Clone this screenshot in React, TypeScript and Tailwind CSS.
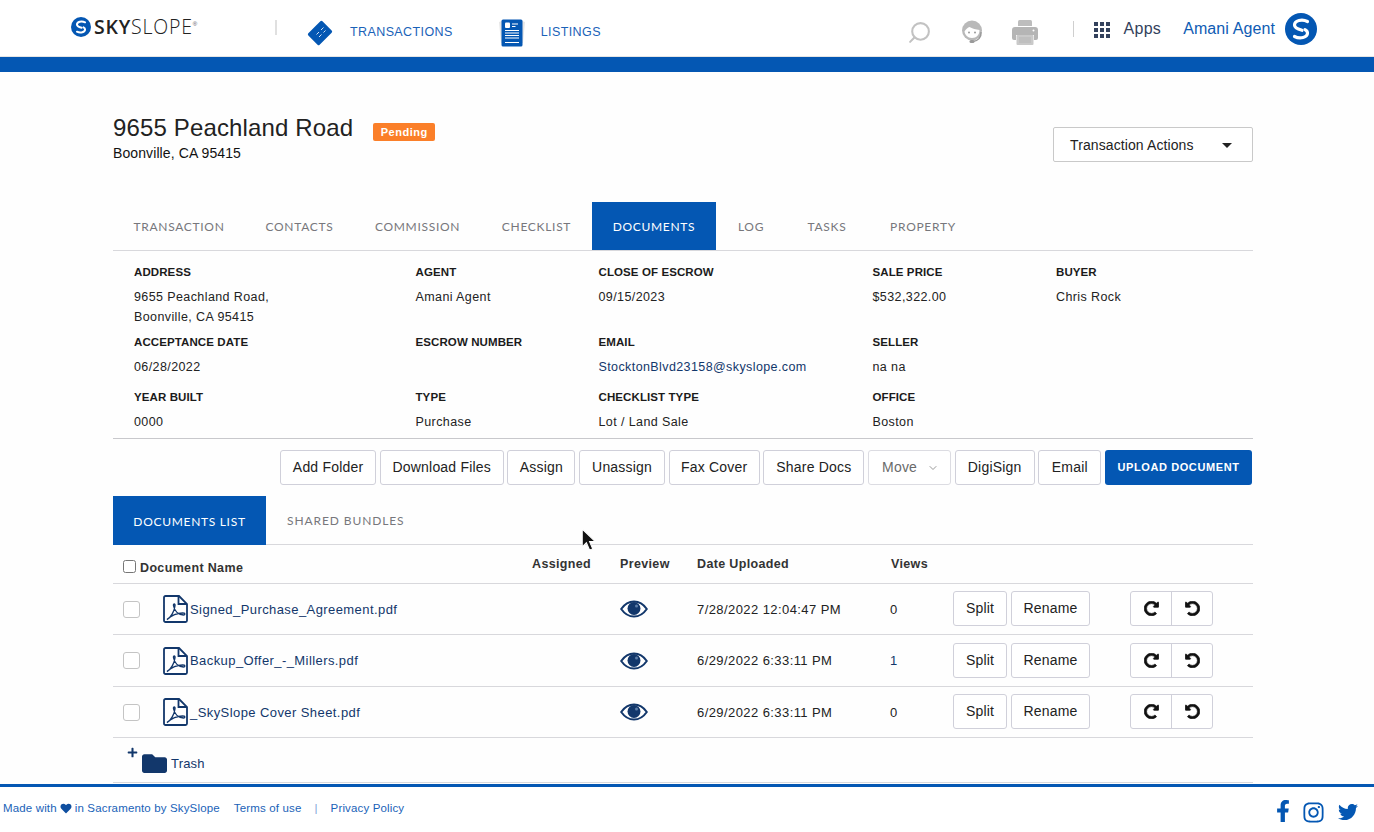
import { FaFacebookF, FaFolder, FaHeart, FaInstagram, FaPlus, FaRedoAlt, FaTwitter, FaUndoAlt } from 'react-icons/fa';
import { ChevronDown, Search } from 'lucide-react';

const tabs = [
  { label: 'TRANSACTION', width: 'w-[132px]' },
  { label: 'CONTACTS', width: 'w-[109px]' },
  { label: 'COMMISSION', width: 'w-[127px]' },
  { label: 'CHECKLIST', width: 'w-[111px]' },
  { label: 'DOCUMENTS', width: 'w-[124px]' },
  { label: 'LOG', width: 'w-[70px]' },
  { label: 'TASKS', width: 'w-[82px]' },
  { label: 'PROPERTY', width: 'w-[110px]' },
];

const toolbar = [
  { label: 'Add Folder', width: 'w-[96px]' },
  { label: 'Download Files', width: 'w-[124px]' },
  { label: 'Assign', width: 'w-[68px]' },
  { label: 'Unassign', width: 'w-[86px]' },
  { label: 'Fax Cover', width: 'w-[91px]' },
  { label: 'Share Docs', width: 'w-[101px]' },
];

const docs = [
  { name: 'Signed_Purchase_Agreement.pdf', date: '7/28/2022 12:04:47 PM', views: '0', height: 'h-[51px]', text: 'mt-[2px]', btn: 'mb-[2px]' },
  { name: 'Backup_Offer_-_Millers.pdf', date: '6/29/2022 6:33:11 PM', views: '1', height: 'h-[52px]', text: '', btn: '' },
  { name: '_SkySlope Cover Sheet.pdf', date: '6/29/2022 6:33:11 PM', views: '0', height: 'h-[51px]', text: 'mt-[2px]', btn: 'mb-[2px]' },
];

const rowCols = 'grid grid-cols-[419px_88px_77px_193px_63px_177px_123px] items-center';
const infoCols = 'grid grid-cols-[281.5px_183px_274px_183.5px_1fr] pl-[21px]';

function SLogo({ className }: { className: string }) {
  return (
    <svg viewBox="0 0 32 32" className={className}>
      <circle cx="16" cy="16" r="16" fill="#0457b3" />
      <g fill="none" stroke="#fff" strokeWidth="3.200" strokeLinecap="round">
        <path d="M22.500 8.500C17 5.800 9.500 7.500 9.500 12c0 3 4 4.300 7.500 5.300" />
        <path d="M9.500 23.500C15 26.200 22.500 24.500 22.500 20c0-1.500-1-2.600-2.500-3.400" />
      </g>
    </svg>
  );
}

function CardIcon() {
  return (
    <svg viewBox="0 0 26 26" className="w-[26px] h-[26px]">
      <rect x="5" y="3" width="16" height="20" rx="1.500" fill="#0457b3" transform="rotate(45 13 13)" />
      <path d="M9.500 14.500l2.500-2.500M14 10l2.500-2.500M12 17l2.500-2.500M16.500 12.500l2-2" stroke="#d3e2f4" strokeWidth="1" />
    </svg>
  );
}

function ListingIcon() {
  return (
    <svg viewBox="0 0 26 28" className="w-[26px] h-[28px]">
      <path d="M0 3l3-1v22l-1 0zM26 3l-3-1v22l1 0z" fill="#e6e6e6" />
      <rect x="2.500" y="0.500" width="21" height="27" rx="1.500" fill="#0457b3" />
      <rect x="6" y="3.500" width="5" height="5.500" rx="1" fill="#fff" />
      <path d="M13 5h6M13 7.500h3.500M6 11.500h14M6 14h14M6 16.500h14M6 19h14M6 23.500h14" stroke="#fff" strokeWidth="1.200" />
    </svg>
  );
}

function HeadsetIcon() {
  return (
    <svg viewBox="0 0 24 26" className="w-[24px] h-[26px] mt-[7px]">
      <circle cx="12" cy="11.500" r="10" fill="#b9b9b9" />
      <path d="M4.500 12.500C6 10 8 8.500 9.500 8c2.500 1.500 6.500 2.500 10 3 .2 4.500-3 8-7.500 8s-7-3-7.500-6.500z" fill="#fff" />
      <circle cx="9" cy="13.500" r="1" fill="#9a9a9a" />
      <circle cx="15" cy="13.500" r="1" fill="#9a9a9a" />
      <path d="M21 13c.5 5.500-3 9-8 9.500" fill="none" stroke="#9a9a9a" strokeWidth="1.500" />
      <rect x="9.500" y="21" width="5" height="3" rx="1.500" fill="#9a9a9a" />
    </svg>
  );
}

function PrinterIcon() {
  return (
    <svg viewBox="0 0 26 25" className="w-[26px] h-[25px] mt-[9px]">
      <path d="M6 1.500A1.500 1.500 0 0 1 7.500 0h11A1.500 1.500 0 0 1 20 1.500V6H6z" fill="#bdbdbd" />
      <path d="M3 7h20a3 3 0 0 1 3 3v8a2 2 0 0 1-2 2h-2v-5H4v5H2a2 2 0 0 1-2-2v-8a3 3 0 0 1 3-3z" fill="#b5b5b5" />
      <circle cx="21.500" cy="10.500" r="1" fill="#fff" />
      <rect x="4.500" y="15" width="17" height="10" rx="1" fill="#c9c9c9" />
      <path d="M7 18h12M7 20h12M7 22h12" stroke="#b5b5b5" strokeWidth="1" />
    </svg>
  );
}

function AppsIcon() {
  return (
    <div className="grid grid-cols-3 gap-[2px] w-[16px] mt-[4px]">
      {Array.from({ length: 9 }).map((_, i) => (
        <div key={i} className="w-[4px] h-[4px] bg-[#33415c]" />
      ))}
    </div>
  );
}

function PdfIcon() {
  return (
    <svg viewBox="0 0 25 28" className="ml-[1px] w-[25px] h-[28px] shrink-0">
      <path d="M2.500 1H16l8 8v16.500a1.500 1.500 0 0 1-1.500 1.500h-20A1.500 1.500 0 0 1 1 25.500v-23A1.500 1.500 0 0 1 2.500 1z" fill="#fff" stroke="#12376b" strokeWidth="1.800" />
      <path d="M15.500 1v8h8.500" fill="none" stroke="#12376b" strokeWidth="1.800" />
      <path
        d="M4 24.500c3.500-1.500 7.500-8 8-14 .2-2-1.700-2-1.500 0 .8 5 4.500 9 10 9.500 1.800 0 1.800-2 0-2-5-.2-11.500 2-16.500 6.500z"
        fill="none"
        stroke="#12376b"
        strokeWidth="1.400"
      />
    </svg>
  );
}

function EyeIcon() {
  return (
    <svg viewBox="0 0 28 18" className="w-[28px] h-[18px]">
      <path d="M1.200 9C5 3.500 9.500 1.500 14 1.500S23 3.500 26.800 9C23 14.500 18.500 16.500 14 16.500S5 14.500 1.200 9z" fill="#fff" stroke="#12376b" strokeWidth="2" />
      <circle cx="14" cy="8.500" r="6.500" fill="#12376b" />
      <circle cx="16.500" cy="6" r="1.500" fill="#5d7ea8" />
    </svg>
  );
}

function Info({ label, lines, link }: { label?: string; lines?: string[]; link?: boolean }) {
  return (
    <div className="text-[12.500px] leading-5 tracking-[0.4px]">
      <div className="h-5 font-bold text-[11.500px] tracking-[0.1px] text-[#1b1b1b]">{label}</div>
      <div className={`mt-[5px] ${link ? 'text-[#12376b]' : 'text-[#222]'}`}>
        {lines?.map((l) => (
          <div key={l}>{l}</div>
        ))}
      </div>
    </div>
  );
}

function Btn({ label, width }: { label: string; width: string }) {
  return (
    <button className={`${width} h-[35px] shrink-0 bg-white border border-[#d0d0da] rounded-[3px] text-[14px] tracking-[0.2px] text-[#222]`}>
      {label}
    </button>
  );
}

export default function App() {
  return (
    <div
      className="relative h-[832px] overflow-hidden flex flex-col bg-[#fefefe]"
      style={{ fontFamily: '"Liberation Sans", Arial, sans-serif' }}
    >
      <header className="h-[57px] shrink-0 bg-white flex items-center border-b border-[#e5e5e5]">
        <div className="flex items-center ml-[71px] w-[204px] -mt-[2px] h-[30px]">
          <SLogo className="w-[20px] h-[20px]" />
          <span className="ml-[3px] text-[19.500px] tracking-[0.8px] text-[#222] font-['Open_Sans',sans-serif] font-light leading-none">
            <b className="font-semibold">SKY</b>SLOPE
          </span>
          <sup className="text-[6px] text-[#555]">®</sup>
        </div>
        <div className="w-[2px] h-[15px] -mt-[1px] bg-[#e0e0e0]" />
        <div className="flex items-center ml-[30px] gap-[17px] mt-[9px]">
          <CardIcon />
          <span className="text-[12.500px] tracking-[0.4px] text-[#1a62b8]">TRANSACTIONS</span>
        </div>
        <div className="flex items-center ml-[46px] gap-[16px] mt-[9px]">
          <ListingIcon />
          <span className="text-[12.500px] tracking-[0.4px] text-[#1a62b8]">LISTINGS</span>
        </div>
        <div className="flex-1" />
        <div className="flex items-center">
          <Search className="w-[25px] h-[25px] text-[#c2c2c2] -scale-x-100 mt-[8px]" strokeWidth={2} />
          <div className="ml-[28px]">
            <HeadsetIcon />
          </div>
          <div className="ml-[28px]">
            <PrinterIcon />
          </div>
          <div className="ml-[35px] mt-[2px] w-[1px] h-[16px] bg-[#cfcfcf]" />
          <div className="ml-[20px]">
            <AppsIcon />
          </div>
          <span className="ml-[14px] mt-[2px] text-[16px] tracking-[0.3px] text-[#33415c]">Apps</span>
          <span className="ml-[22px] mt-[2px] text-[16px] tracking-[0.1px] text-[#0f5cb4]">Amani Agent</span>
          <SLogo className="ml-[10px] mr-[57px] mt-[2px] w-[32px] h-[32px]" />
        </div>
      </header>
      <div className="h-[15px] shrink-0 bg-[#0457b3]" />

      <main className="w-[1140px] ml-[113px] flex-1 flex flex-col">
        <div className="h-[130px] shrink-0 flex justify-between">
          <div className="pt-[41px]">
            <div className="flex items-center">
              <h1 className="text-[24px] leading-[30px] tracking-[0.14px] text-[#222]">9655 Peachland Road</h1>
              <span className="ml-[20px] mt-[8px] h-[18px] w-[62px] rounded-[2px] bg-[#fb7f29] text-white text-[11px] font-bold tracking-[0.5px] flex items-center justify-center">
                Pending
              </span>
            </div>
            <div className="text-[14px] leading-5 tracking-[0.1px] text-[#111]">Boonville, CA 95415</div>
          </div>
          <button className="mt-[55px] w-[200px] h-[35px] bg-white border border-[#c9c9c9] rounded-[2px] flex items-center justify-between pl-[16px] pr-[20px] pt-[1px] text-[14px] tracking-[0.1px] text-[#222]">
            Transaction Actions
            <span className="w-0 h-0 border-x-[5px] border-x-transparent border-t-[5px] border-t-[#222]" />
          </button>
        </div>

        <nav className="h-[49px] shrink-0 flex border-b border-[#d8d8dc] text-[12px] font-['Lato',sans-serif] tracking-[0.7px] text-[#77777c]">
          {tabs.map((t) => (
            <div
              key={t.label}
              className={`${t.width} h-[48px] pt-[2px] flex items-center justify-center ${t.label === 'DOCUMENTS' ? 'bg-[#0457b3] text-white' : ''}`}
            >
              {t.label}
            </div>
          ))}
        </nav>

        <section className="h-[188px] shrink-0 pt-[11px] border-b border-[#c8c8cc]">
          <div className={`${infoCols} mb-[5px]`}>
            <Info label="ADDRESS" lines={['9655 Peachland Road,', 'Boonville, CA 95415']} />
            <Info label="AGENT" lines={['Amani Agent']} />
            <Info label="CLOSE OF ESCROW" lines={['09/15/2023']} />
            <Info label="SALE PRICE" lines={['$532,322.00']} />
            <Info label="BUYER" lines={['Chris Rock']} />
          </div>
          <div className={`${infoCols} mb-[10px]`}>
            <Info label="ACCEPTANCE DATE" lines={['06/28/2022']} />
            <Info label="ESCROW NUMBER" />
            <Info label="EMAIL" lines={['StocktonBlvd23158@skyslope.com']} link />
            <Info label="SELLER" lines={['na na']} />
            <div />
          </div>
          <div className={infoCols}>
            <Info label="YEAR BUILT" lines={['0000']} />
            <Info label="TYPE" lines={['Purchase']} />
            <Info label="CHECKLIST TYPE" lines={['Lot / Land Sale']} />
            <Info label="OFFICE" lines={['Boston']} />
            <div />
          </div>
        </section>

        <div className="h-[57px] shrink-0 flex justify-end items-start gap-[3.670px] pt-[11px] pr-[1px]">
          {toolbar.map((b) => (
            <Btn key={b.label} {...b} />
          ))}
          <button className="w-[83px] h-[35px] shrink-0 bg-white border border-[#dcdce2] rounded-[3px] flex items-center pl-[13px] text-[14px] tracking-[0.2px] text-[#6a6a6a]">
            Move
            <ChevronDown className="ml-[10px] w-[12px] h-[12px] text-[#999]" />
          </button>
          <Btn label="DigiSign" width="w-[80px]" />
          <Btn label="Email" width="w-[63px]" />
          <button className="w-[147px] h-[35px] shrink-0 bg-[#0457b3] rounded-[3px] text-white text-[11px] font-bold tracking-[0.6px]">
            UPLOAD DOCUMENT
          </button>
        </div>

        <div className="h-[49px] shrink-0 flex border-b border-[#d8d8dc] text-[12px] font-['Lato',sans-serif] tracking-[0.7px] text-[#77777c]">
          <div className="h-[49px] pt-[2px] w-[153px] bg-[#0457b3] text-white flex items-center justify-center">DOCUMENTS LIST</div>
          <div className="h-[48px] pt-[2px] ml-[21px] flex items-center tracking-[0.9px]">SHARED BUNDLES</div>
        </div>

        <div className={`${rowCols} h-[39px] shrink-0 border-b border-[#d8d8dc] text-[12.500px] font-bold tracking-[0.35px] text-[#333]`}>
          <div className="flex items-center pl-[10px] mt-[8px]">
            <input type="checkbox" readOnly className="w-[13px] h-[13px] mr-[4px] -mt-[4px]" />
            Document Name
          </div>
          <div>Assigned</div>
          <div>Preview</div>
          <div>Date Uploaded</div>
          <div className="pl-[1px]">Views</div>
        </div>

        {docs.map((d) => (
          <div key={d.name} className={`${rowCols} ${d.height} shrink-0 border-b border-[#d8d8dc] text-[13px] tracking-[0.42px] text-[#222]`}>
            <div className="flex items-center pl-[10px]">
              <div className="w-[17px] h-[17px] bg-white border border-[#c4c4c4] rounded-[3px] mr-[22px] shrink-0" />
              <PdfIcon />
              <span className={`ml-[2px] text-[#12376b] ${d.text}`}>{d.name}</span>
            </div>
            <div />
            <div>
              <EyeIcon />
            </div>
            <div className={d.text}>{d.date}</div>
            <div className={`${d.text} ${d.views === '1' ? 'text-[#12376b]' : ''}`}>{d.views}</div>
            <div className={`flex gap-[4px] ${d.btn}`}>
              <Btn label="Split" width="w-[54px]" />
              <Btn label="Rename" width="w-[79px]" />
            </div>
            <div className={`flex w-[83px] h-[35px] bg-white border border-[#d0d0da] rounded-[3px] text-[#111] ${d.btn}`}>
              <div className="w-[41px] border-r border-[#d0d0da] flex items-center justify-center">
                <FaRedoAlt className="w-[15px] h-[15px]" stroke="currentColor" strokeWidth={24} />
              </div>
              <div className="flex-1 flex items-center justify-center">
                <FaUndoAlt className="w-[15px] h-[15px]" stroke="currentColor" strokeWidth={24} />
              </div>
            </div>
          </div>
        ))}

        <div className="h-[45px] shrink-0 border-b border-[#d8d8dc] flex pl-[14px] pt-[9px] text-[13px] tracking-[0.2px] text-[#12376b]">
          <FaPlus className="w-[11px] h-[11px]" />
          <FaFolder className="ml-[4px] mt-[4px] w-[25px] h-[25px]" />
          <span className="ml-[4px] mt-[7px] leading-5">Trash</span>
        </div>
      </main>

      <footer className="absolute left-0 right-0 bottom-0 h-[48px] bg-white border-t-[3px] border-[#0457b3] flex justify-between text-[11.500px] tracking-[0.15px] text-[#1a62b8]">
        <div className="flex items-start pl-[3px] pt-[13px] leading-4">
          <span className="flex items-center">
            Made with <FaHeart className="mx-[3px] w-[12px] h-[11px] text-[#0f4fa0]" /> in Sacramento by SkySlope
          </span>
          <span className="ml-[14px]">Terms of use</span>
          <span className="ml-[13px] text-[#7fa6d8]">|</span>
          <span className="ml-[13px]">Privacy Policy</span>
        </div>
        <div className="flex items-start pt-[13px] pr-[16px] text-[#0457b3]">
          <FaFacebookF className="w-[22px] h-[22px]" />
          <FaInstagram className="ml-[8px] mt-[1px] w-[23px] h-[23px]" />
          <FaTwitter className="ml-[13px] mt-[2px] w-[20px] h-[20px]" />
        </div>
      </footer>

      {/* mouse cursor caught in the capture */}
      <svg viewBox="0 0 14 22" className="absolute left-[581px] top-[528px] w-[15px] h-[23px]">
        <path d="M1 1v17l4-4 3 7 3-1-3-7h5.500z" fill="#111" stroke="#fff" strokeWidth="1" />
      </svg>
    </div>
  );
}
